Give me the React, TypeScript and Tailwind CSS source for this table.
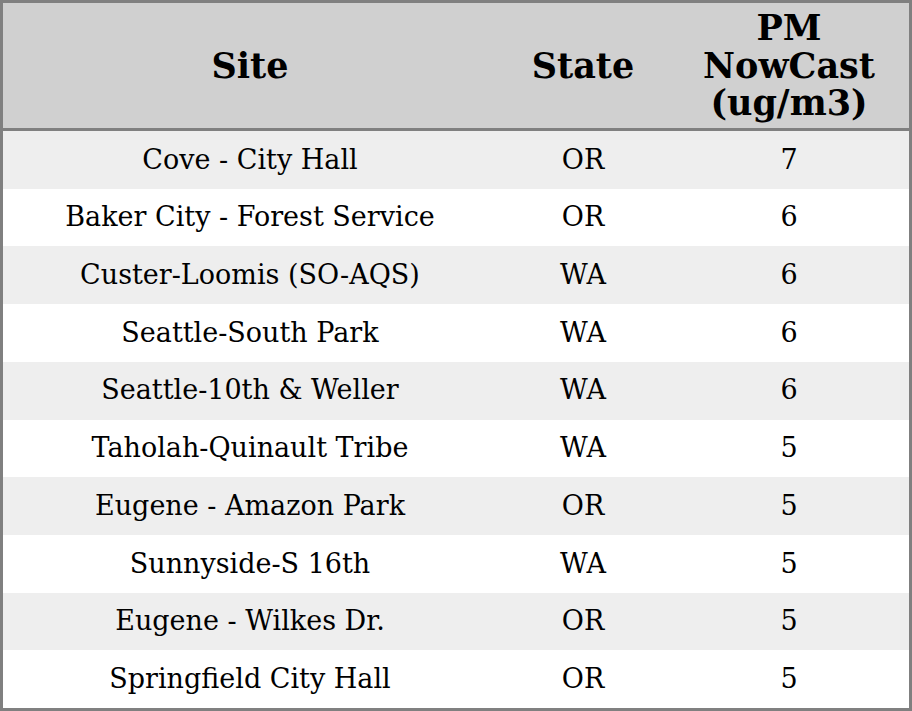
import React from 'react';

const rows = [
  { site: 'Cove - City Hall', state: 'OR', pm: 7 },
  { site: 'Baker City - Forest Service', state: 'OR', pm: 6 },
  { site: 'Custer-Loomis (SO-AQS)', state: 'WA', pm: 6 },
  { site: 'Seattle-South Park', state: 'WA', pm: 6 },
  { site: 'Seattle-10th & Weller', state: 'WA', pm: 6 },
  { site: 'Taholah-Quinault Tribe', state: 'WA', pm: 5 },
  { site: 'Eugene - Amazon Park', state: 'OR', pm: 5 },
  { site: 'Sunnyside-S 16th', state: 'WA', pm: 5 },
  { site: 'Eugene - Wilkes Dr.', state: 'OR', pm: 5 },
  { site: 'Springfield City Hall', state: 'OR', pm: 5 },
];

export default function App() {
  return (
    <div className="w-[912px] h-[711px] flex flex-col border-[3px] border-[#808080] bg-white text-black font-['DejaVu_Serif',serif]">
      <div className="h-[128px] shrink-0 flex items-center bg-[#d0d0d0] border-b-[3px] border-[#808080] font-bold text-[35px] leading-[37.5px] text-center">
        <div className="w-[494px]">Site</div>
        <div className="w-[172px]">State</div>
        <div className="flex-1">
          PM
          <br />
          NowCast
          <br />
          (ug/m3)
        </div>
      </div>
      <div className="flex-1 flex flex-col text-[27px] text-center">
        {rows.map((r, i) => (
          <div key={i} className={`flex-1 flex items-center ${i % 2 === 0 ? 'bg-[#eeeeee]' : 'bg-white'}`}>
            <div className="w-[494px]">{r.site}</div>
            <div className="w-[172px]">{r.state}</div>
            <div className="flex-1">{r.pm}</div>
          </div>
        ))}
      </div>
    </div>
  );
}
